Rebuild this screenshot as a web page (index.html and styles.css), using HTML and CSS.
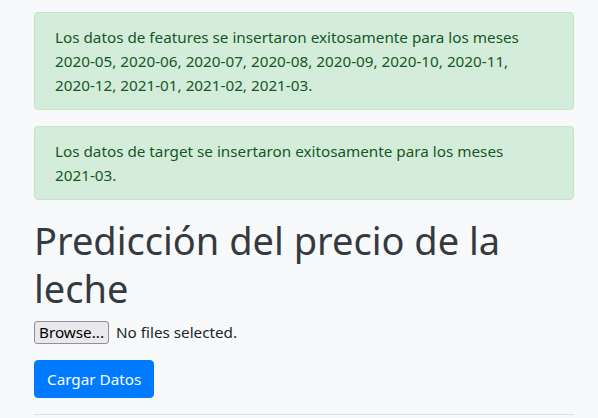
FILE: index.html
```html
<!DOCTYPE html>
<html lang="es">
<head>
<meta charset="utf-8">
<title>Predicción del precio de la leche</title>
<link rel="stylesheet" href="styles.css">
</head>
<body>
<div class="container">
  <div class="alert">Los datos de features se insertaron exitosamente para los meses <span class="d">2020-05,</span> <span class="d">2020-06,</span> <span class="d">2020-07,</span> <span class="d">2020-08,</span> <span class="d">2020-09,</span> <span class="d">2020-10,</span> <span class="d">2020-11,</span> <span class="d">2020-12,</span> <span class="d">2021-01,</span> <span class="d">2021-02,</span> <span class="d">2021-03.</span></div>
  <div class="alert">Los datos de target se insertaron exitosamente para los meses <span class="d">2021-03.</span></div>
  <h1 class="title">Predicción del precio de la leche</h1>
  <form class="upload">
    <div class="form-group">
      <label class="file">
        <span class="file-btn">Browse...</span>
        <span class="file-name">No files selected.</span>
      </label>
    </div>
    <button type="button" class="btn-primary">Cargar Datos</button>
  </form>
  <hr class="rule">
</div>
</body>
</html>
```

FILE: styles.css
```css
html, body {
  margin: 0;
  padding: 0;
}
body {
  background: #f8f9fa;
  color: #212529;
  font-family: "Noto Sans", "Open Sans", sans-serif;
  font-size: 15.25px;
  line-height: 24px;
}
.container {
  padding: 12px 24px 0 34px;
}
.alert {
  background: #d4edda;
  border: 1px solid #c3e6cb;
  color: #155724;
  border-radius: 4px;
  padding: 12px 20px;
  margin-bottom: 16px;
}
.d {
  white-space: nowrap;
}
.title {
  margin: 0 0 8px;
  font-size: 38px;
  line-height: 48px;
  font-weight: 400;
  color: #343a40;
}
.upload {
  margin: 0;
}
.form-group {
  margin-bottom: 16px;
  display: flex;
}
.file {
  display: flex;
  align-items: center;
  gap: 7px;
}
.file-btn {
  display: inline-block;
  background: #e9e9ed;
  border: 1px solid #8f8f9d;
  border-radius: 3px;
  padding: 0 4px;
  line-height: 21px;
  color: #000;
}
.file-name {
  color: #212529;
}
.btn-primary {
  display: inline-block;
  font-family: inherit;
  font-size: 15.25px;
  line-height: 24px;
  padding: 6px 12px;
  border: 1px solid #007bff;
  background: #007bff;
  color: #fff;
  border-radius: 4px;
}
.rule {
  margin: 16px 0 0;
  border: 0;
  border-top: 1px solid rgba(0, 0, 0, 0.1);
}
```
